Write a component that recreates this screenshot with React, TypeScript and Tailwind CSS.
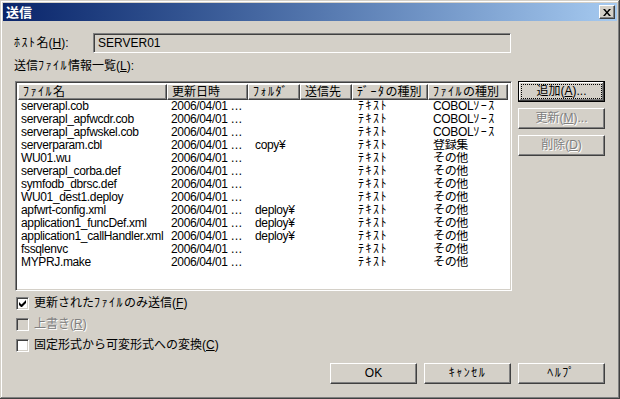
import React from "react";

const rows = [
  ["serverapl.cob", "", "COBOL", "ｿｰｽ"],
  ["serverapl_apfwcdr.cob", "", "COBOL", "ｿｰｽ"],
  ["serverapl_apfwskel.cob", "", "COBOL", "ｿｰｽ"],
  ["serverparam.cbl", "copy¥", "登録集", ""],
  ["WU01.wu", "", "その他", ""],
  ["serverapl_corba.def", "", "その他", ""],
  ["symfodb_dbrsc.def", "", "その他", ""],
  ["WU01_dest1.deploy", "", "その他", ""],
  ["apfwrt-config.xml", "deploy¥", "その他", ""],
  ["application1_funcDef.xml", "deploy¥", "その他", ""],
  ["application1_callHandler.xml", "deploy¥", "その他", ""],
  ["fssqlenvc", "", "その他", ""],
  ["MYPRJ.make", "", "その他", ""],
];

// half-width katakana gets a little extra room, like the bitmap UI font
function K({ children }: { children: React.ReactNode }) {
  return <span className="tracking-[1.5px]">{children}</span>;
}

const headers: React.ReactNode[] = [
  <><K>ﾌｧｲﾙ</K>名</>,
  "更新日時",
  <K>ﾌｫﾙﾀﾞ</K>,
  "送信先",
  <><K>ﾃﾞｰﾀ</K>の種別</>,
  <><K>ﾌｧｲﾙ</K>の種別</>,
];

const raised =
  "border border-t-white border-l-white border-b-[#404040] border-r-[#404040] shadow-[inset_-1px_-1px_#808080,inset_1px_1px_#d4d0c8]";
const sunken =
  "border border-t-[#808080] border-l-[#808080] border-b-white border-r-white shadow-[inset_1px_1px_#404040,inset_-1px_-1px_#d4d0c8]";

function Button({ label, disabled, focused }: { label: React.ReactNode; disabled?: boolean; focused?: boolean }) {
  return (
    <div
      className={
        "w-[87px] h-[21px] flex items-center justify-center bg-[#d4d0c8] " +
        (focused
          ? "border border-black shadow-[inset_-1px_-1px_#404040,inset_1px_1px_#fff,inset_-2px_-2px_#808080]"
          : raised) +
        (disabled ? " text-[#808080] [text-shadow:1px_1px_#fff]" : " text-black")
      }
    >
      {focused ? (
        <span className="w-[79px] h-[13px] flex items-center justify-center outline-1 outline-dotted outline-black">
          {label}
        </span>
      ) : (
        <span>{label}</span>
      )}
    </div>
  );
}

function Check({ checked, disabled, label }: { checked?: boolean; disabled?: boolean; label: React.ReactNode }) {
  return (
    <div className="flex items-center h-[21px] gap-[5px]">
      <div
        className={
          "w-[13px] h-[13px] flex items-center justify-center " +
          sunken +
          (disabled ? " bg-[#d4d0c8]" : " bg-white")
        }
      >
        {checked && (
          <svg width="7" height="7" viewBox="0 0 7 7">
            <path d="M0 2v3l2 2h1l4-4V0L2.5 4.5z" fill="#000" />
          </svg>
        )}
      </div>
      <span className={disabled ? "text-[#808080] [text-shadow:1px_1px_#fff]" : "text-black"}>{label}</span>
    </div>
  );
}

export default function App() {
  return (
    <div
      className="w-[620px] h-[399px] bg-[#d4d0c8] p-[3px] text-[12px] leading-[13px] text-black shadow-[inset_-1px_-1px_#404040,inset_1px_1px_#d4d0c8,inset_-2px_-2px_#808080,inset_2px_2px_#fff]"
      style={{ fontFamily: '"Liberation Sans", "Noto Sans CJK JP", sans-serif' }}
    >
      {/* title bar */}
      <div className="h-[18px] flex items-center justify-between bg-linear-to-r from-[#0a246a] to-[#a6caf0] pl-[3px] pr-[2px]">
        <span className="text-white font-bold text-[13px]">送信</span>
        <div className={"w-[16px] h-[14px] bg-[#d4d0c8] flex items-center justify-center " + raised}>
          <svg width="8" height="7" viewBox="0 0 8 7">
            <path d="M0 0h2l2 2.5L6 0h2L5 3.5 8 7H6L4 4.5 2 7H0l3-3.5z" fill="#000" />
          </svg>
        </div>
      </div>

      <div className="pl-[11px] pr-[12px]">
        {/* host */}
        <div className="flex items-center mt-[12px]">
          <span className="w-[79px]">
            <K>ﾎｽﾄ</K>名(<span className="underline">H</span>):
          </span>
          <div className={"w-[418px] h-[20px] flex items-center pl-[4px] " + sunken}>SERVER01</div>
        </div>

        <div className="mt-[7px]">
          送信<K>ﾌｧｲﾙ</K>情報一覧(<span className="underline">L</span>):
        </div>

        <div className="flex mt-[8px] gap-[6px]">
          {/* list */}
          <div className={"ml-[1px] w-[497px] h-[210px] bg-white p-[2px] " + sunken}>
            <div className="grid grid-cols-[149px_81px_52px_52px_76px_80px]">
              {headers.map((h, i) => (
                <div
                  key={i}
                  className={"h-[16px] bg-[#d4d0c8] flex items-center pl-[4px] overflow-hidden whitespace-nowrap " + raised}
                >
                  <span>{h}</span>
                </div>
              ))}
            </div>
            {rows.map(([name, folder, type, kana]) => (
              <div
                key={name}
                className="grid grid-cols-[149px_81px_52px_52px_76px_80px] h-[13px] whitespace-nowrap tracking-[-0.35px]"
              >
                <span className="pl-[3px] overflow-hidden">{name}</span>
                <span className="pl-[4px] overflow-hidden">2006/04/01 …</span>
                <span className="pl-[7px] overflow-hidden">{folder}</span>
                <span></span>
                <span className="pl-[6px] overflow-hidden">
                  <K>ﾃｷｽﾄ</K>
                </span>
                <span className="pl-[5px] overflow-hidden">
                  {type}
                  {kana && <K>{kana}</K>}
                </span>
              </div>
            ))}
          </div>

          {/* side buttons */}
          <div className="flex flex-col gap-[6px]">
            <Button focused label={<>追加(<span className="underline">A</span>)...</>} />
            <Button disabled label={<>更新(<span className="underline">M</span>)...</>} />
            <Button disabled label={<>削除(<span className="underline">D</span>)</>} />
          </div>
        </div>

        <div className="mt-[2px] ml-[2px] flex flex-col">
          <Check checked label={<>更新された<K>ﾌｧｲﾙ</K>のみ送信(<span className="underline">F</span>)</>} />
          <Check disabled label={<>上書き(<span className="underline">R</span>)</>} />
          <Check label={<>固定形式から可変形式への変換(<span className="underline">C</span>)</>} />
        </div>

        <div className="flex justify-end gap-[7px] mt-[7px]">
          <Button label="OK" />
          <Button label={<K>ｷｬﾝｾﾙ</K>} />
          <Button label={<K>ﾍﾙﾌﾟ</K>} />
        </div>
      </div>
    </div>
  );
}
